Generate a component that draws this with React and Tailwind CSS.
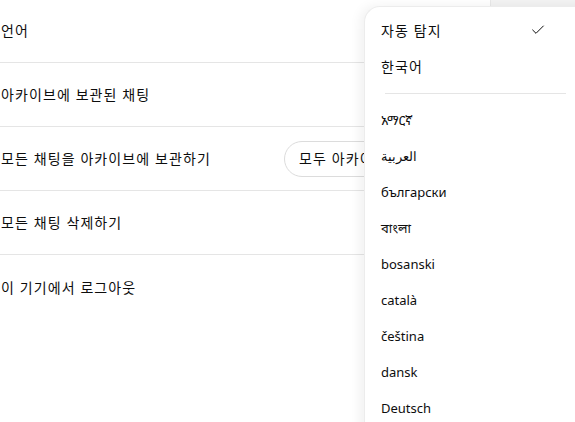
import React from "react";
import { Check } from "lucide-react";

const FONT = {
    fontFamily: '"Segoe UI", "Noto Sans", "Noto Sans CJK KR", "Noto Sans Ethiopic", "Noto Sans Bengali", sans-serif',
};

const rows = [
    { label: "언어" },
    { label: "아카이브에 보관된 채팅" },
    { label: "모든 채팅을 아카이브에 보관하기", button: "모두 아카이브에 보관하기" },
    { label: "모든 채팅 삭제하기" },
    { label: "이 기기에서 로그아웃", last: true },
];

const languages = [
    "አማርኛ",
    "العربية",
    "български",
    "বাংলা",
    "bosanski",
    "català",
    "čeština",
    "dansk",
    "Deutsch",
    "English",
];

export default function App() {
    return (
        <div className="relative w-[575px] h-[422px] overflow-hidden bg-white text-[#0d0d0d]" style={FONT}>
            {/* panel behind the menu */}
            <div className="absolute left-[490px] top-0 w-[85px] h-[7px] bg-[#f3f3f3] border-l border-[#e8e8e8]"></div>

            {/* settings rows */}
            <div className="w-[490px] -mt-px flex flex-col">
                {rows.map((row) => (
                    <div
                        key={row.label}
                        className={`h-[64px] flex items-center pl-px text-[14px] ${
                            row.last ? "" : "border-b border-[#e5e5e5]"
                        }`}
                    >
                        <span className="w-[283px] shrink-0 tracking-[1.1px]">{row.label}</span>
                        {row.button && (
                            <button className="h-[36px] px-[14px] rounded-full border border-[#dcdcdc] bg-white text-[14px] tracking-[1.1px] whitespace-nowrap">
                                {row.button}
                            </button>
                        )}
                    </div>
                ))}
            </div>

            {/* language dropdown */}
            <div className="absolute left-[364px] top-[6px] w-[232px] rounded-tl-[16px] bg-white border-l border-t border-[#ececec] shadow-[-4px_0_12px_rgba(0,0,0,0.06)] pt-[5px] pb-[6px]">
                <div className="h-[36px] flex items-center justify-between pl-[16px] pr-[50px] text-[14px]">
                    <span className="tracking-[1.1px]">자동 탐지</span>
                    <Check size={16} strokeWidth={1.5} />
                </div>
                <div className="h-[36px] flex items-center pl-[16px] text-[14px] tracking-[1.1px]">한국어</div>
                <div className="mt-[9px] mb-[9px] ml-[20px] mr-[30px] h-px bg-[#e5e5e5]"></div>
                {languages.map((lang) => (
                    <div key={lang} className="h-[36px] flex items-center pl-[16px] text-[13px]">
                        {lang}
                    </div>
                ))}
            </div>
        </div>
    );
}
